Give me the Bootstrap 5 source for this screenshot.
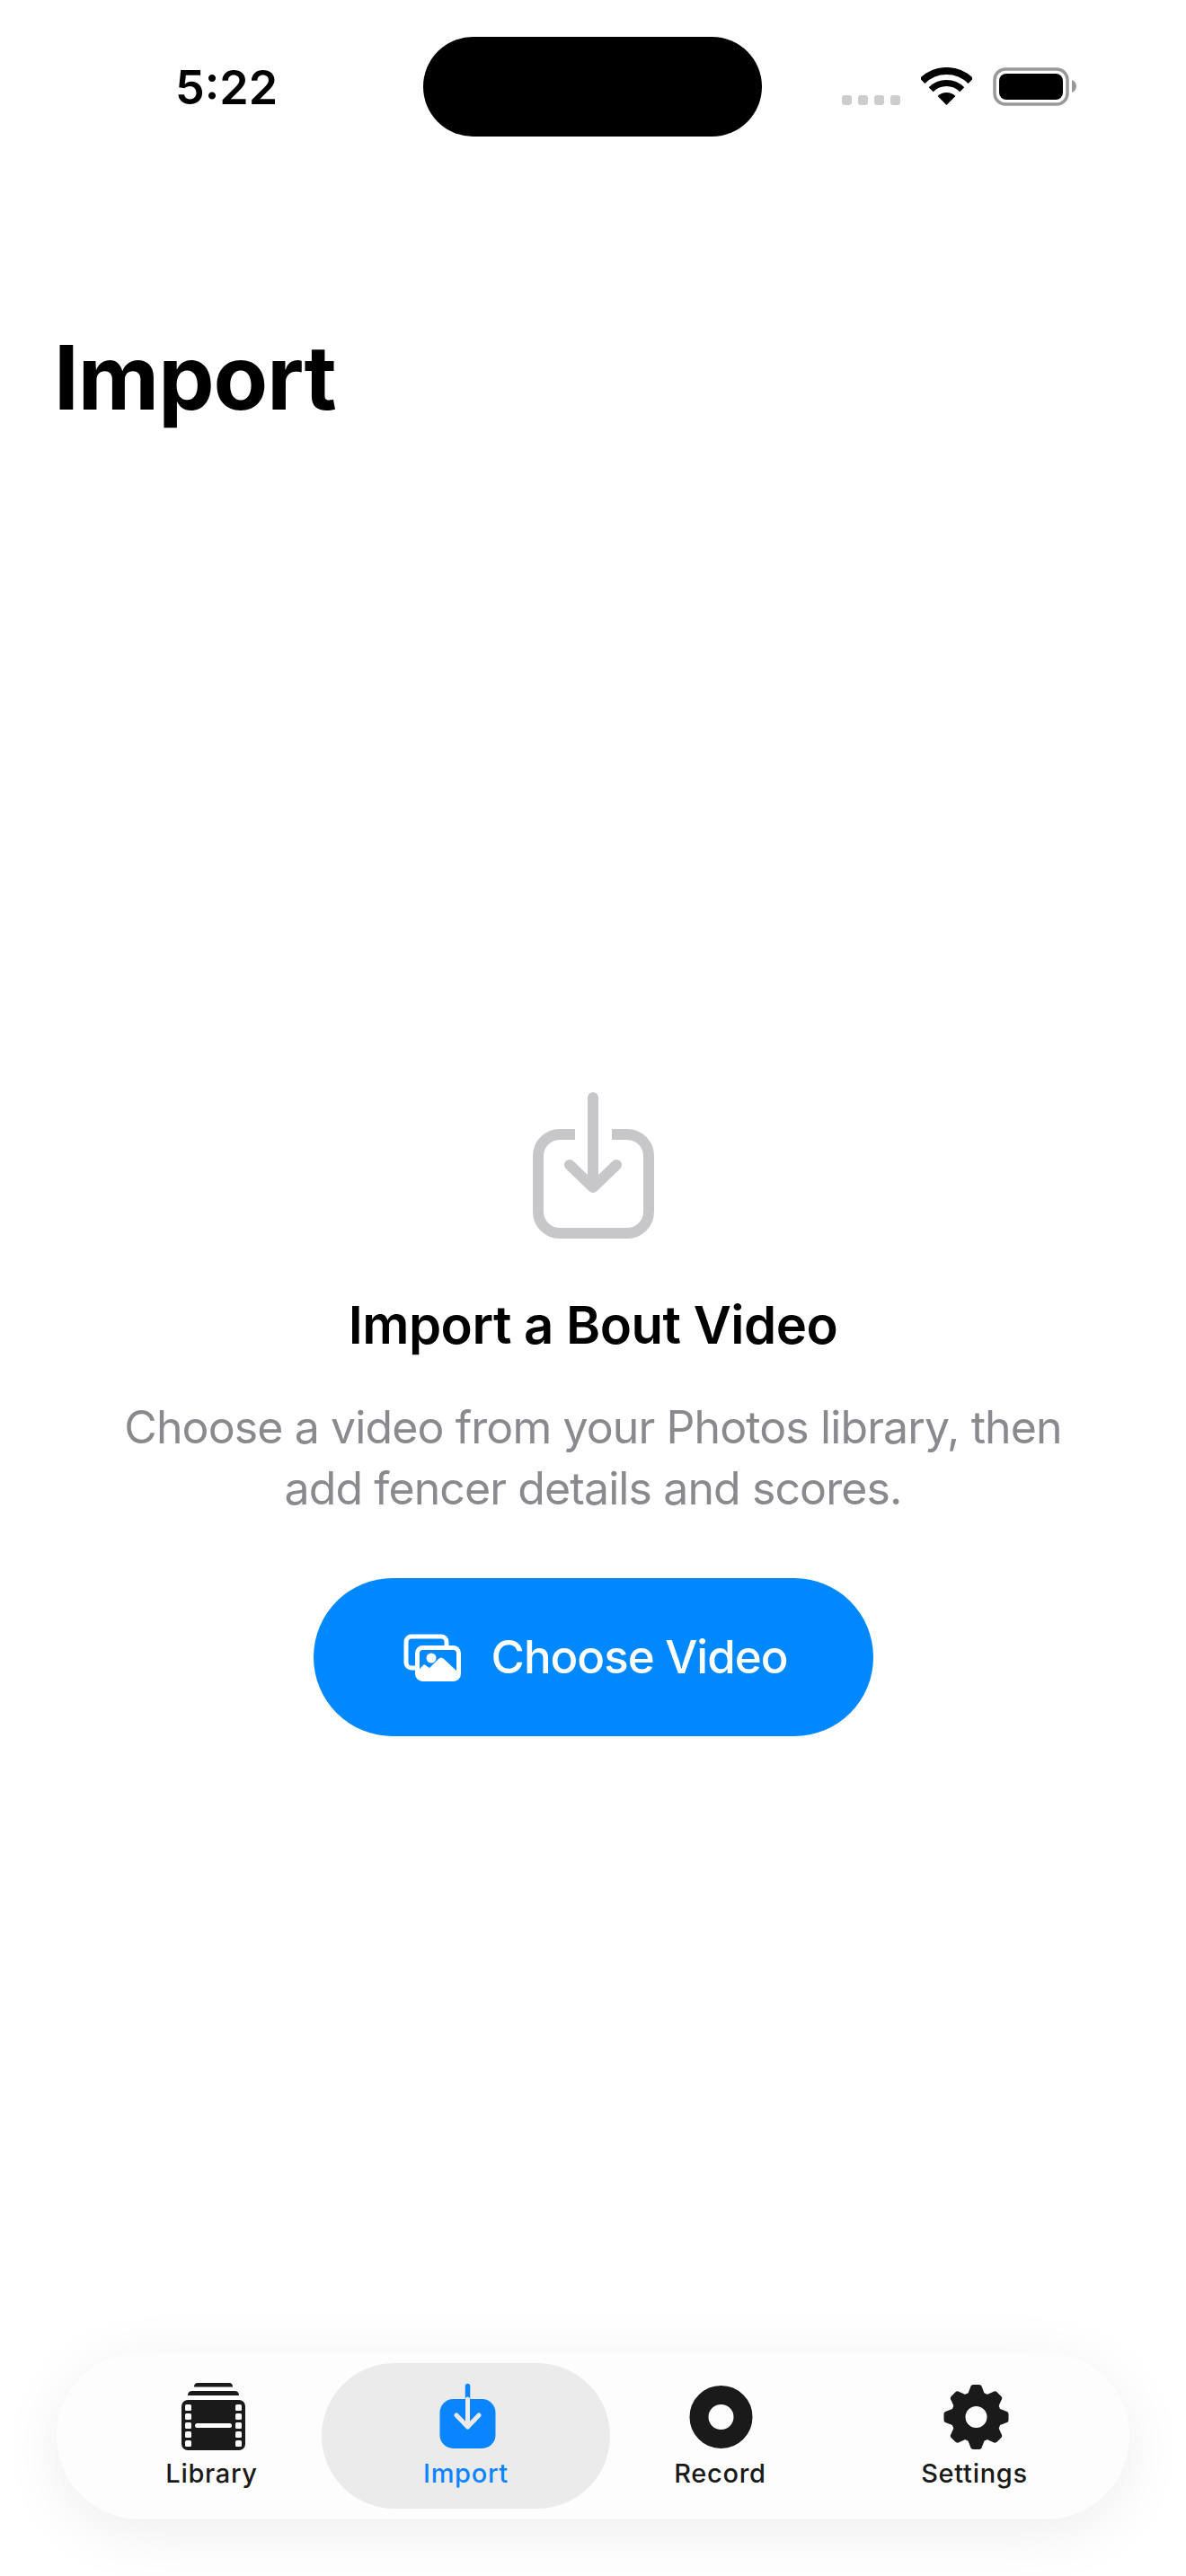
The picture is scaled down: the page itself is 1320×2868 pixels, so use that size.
<!DOCTYPE html>
<html lang="en">

<head>
    <meta charset="UTF-8">
    <meta name="viewport" content="width=device-width, initial-scale=1.0">
    <title>Import</title>
    <link href="https://cdn.jsdelivr.net/npm/bootstrap@5.3.0/dist/css/bootstrap.min.css" rel="stylesheet">
    <style>
        body {
            font-family: "Inter", "Liberation Sans", sans-serif;
            background: #fff;
            color: #000;
        }

        .phone-screen {
            width: 1320px;
            height: 2868px;
            overflow: hidden;
        }

        /* status bar */
        .status-row {
            padding: 41px 0 0 195px;
        }

        .status-time {
            width: 276px;
            margin-top: 26px;
            font-size: 52px;
            line-height: 62px;
            font-weight: 600;
        }

        .island {
            width: 377px;
            height: 111px;
            border-radius: 56px;
            background: #000;
        }

        .status-icons {
            margin: 34px 0 0 89px;
            gap: 23px;
        }

        .signal-dots {
            gap: 7px;
            padding-bottom: 1px;
        }

        .signal-dots span {
            width: 11px;
            height: 11px;
            border-radius: 3px;
            background: #cdcdcd;
        }

        /* heading */
        .page-title {
            margin: 208px 0 0 60px;
            font-size: 99px;
            line-height: 120px;
            font-weight: 700;
            letter-spacing: -1px;
        }

        /* empty state */
        .empty-state {
            padding-top: 736px;
        }

        .empty-title {
            margin: 61px 0 0;
            font-size: 58px;
            line-height: 70px;
            font-weight: 600;
            letter-spacing: -.5px;
        }

        .empty-text {
            margin: 45px 0 0;
            font-size: 50px;
            line-height: 68px;
            letter-spacing: -.9px;
            color: #8a8a8e;
        }

        .choose-btn {
            width: 623px;
            height: 176px;
            margin-top: 66px;
            padding: 0 0 0 6px;
            gap: 33px;
            border: 0;
            border-radius: 88px;
            background: #0088ff;
            font-size: 51px;
            font-weight: 500;
            letter-spacing: -1px;
            color: #fff;
        }

        /* tab bar */
        .tab-bar {
            height: 186px;
            margin: auto 63px 63px;
            padding: 12px 31px;
            display: grid;
            grid-template-columns: repeat(4, 1fr);
            border-radius: 93px;
            background: #fdfdfd;
            box-shadow: 0 14px 70px rgba(0, 0, 0, .07);
        }

        .tab-link {
            padding-top: 22px;
            gap: 7px;
            border-radius: 81px;
            font-size: 29px;
            line-height: 36px;
            font-weight: 500;
            letter-spacing: .7px;
            color: #1a1a1a;
            text-decoration: none;
        }

        .tab-link.is-active {
            margin: 0 -19px;
            background: #ebebeb;
            color: #0a84ff;
        }
    </style>
</head>

<body>
    <div class="phone-screen d-flex flex-column">
        <div class="status-row d-flex align-items-start">
            <div class="status-time">5:22</div>
            <div class="island"></div>
            <div class="status-icons d-flex align-items-end">
                <div class="signal-dots d-flex">
                    <span></span><span></span><span></span><span></span>
                </div>
                <svg width="57" height="43" viewBox="0 0 57 43">
                    <path d="M1.6 15.1A38 38 0 0 1 55.4 15.1" fill="none" stroke="#000" stroke-width="8" />
                    <path d="M11.2 24.7A24.5 24.5 0 0 1 45.8 24.7" fill="none" stroke="#000" stroke-width="7" />
                    <path d="M28.5 42L18.6 32.1A14 14 0 0 1 38.4 32.1Z" />
                </svg>
                <svg width="93" height="43" viewBox="0 0 93 43">
                    <rect x="2" y="2" width="81" height="39" rx="12" fill="none" stroke="#999" stroke-width="3.5" />
                    <rect x="7" y="7" width="71" height="29" rx="8" />
                    <path d="M88 14C91 15 93 18 93 21S91 27 88 28Z" fill="#999" />
                </svg>
            </div>
        </div>

        <h1 class="page-title">Import</h1>

        <div class="empty-state d-flex flex-column align-items-center text-center">
            <svg width="135" height="163" viewBox="0 0 135 163" fill="none" stroke="#c7c7c9" stroke-width="12">
                <path d="M47 47H30A24 24 0 0 0 6 71V133A24 24 0 0 0 30 157H105A24 24 0 0 0 129 133V71A24 24 0 0 0 105 47H88" />
                <path d="M67 6V105" stroke-linecap="round" />
                <path d="M41 81L67 106L93 81" stroke-linecap="round" stroke-linejoin="round" />
            </svg>
            <h2 class="empty-title">Import a Bout Video</h2>
            <p class="empty-text">Choose a video from your Photos library, then<br>add fencer details and scores.</p>
            <button type="button" class="btn choose-btn d-flex align-items-center justify-content-center">
                <svg width="64" height="53" viewBox="0 0 64 53">
                    <path d="M13 38H9A6 6 0 0 1 3 32V9A6 6 0 0 1 9 3H42A6 6 0 0 1 48 9V13" fill="none" stroke="#fff" stroke-width="5" />
                    <rect x="15.5" y="15.5" width="46" height="35" rx="6" fill="none" stroke="#fff" stroke-width="5" />
                    <path d="M17 45V40L23 34L29 38L39 28C41 26 43 26 45 28L60 42V45C60 48 58 50 56 50H21C19 50 17 48 17 45Z" fill="#fff" />
                    <circle cx="31" cy="27" r="5.5" fill="#fff" />
                </svg>
                <span>Choose Video</span>
            </button>
        </div>

        <nav class="tab-bar">
            <a href="#" class="tab-link d-flex flex-column align-items-center">
                <svg width="80" height="76" viewBox="0 0 80 76">
                    <path d="M20 4.5Q20 0 24 0H59Q63 0 63 4.5Z" fill="#1a1a1a" />
                    <path d="M13 14Q13 9 18 9H65Q70 9 70 14Z" fill="#1a1a1a" />
                    <rect x="6" y="19" width="71" height="56" rx="7" fill="#1a1a1a" />
                    <g fill="#fdfdfd">
                        <rect x="10" y="24" width="7" height="7" rx="1.5" />
                        <rect x="10" y="34" width="7" height="7" rx="1.5" />
                        <rect x="10" y="44" width="7" height="7" rx="1.5" />
                        <rect x="10" y="54" width="7" height="7" rx="1.5" />
                        <rect x="10" y="64" width="7" height="7" rx="1.5" />
                        <rect x="66" y="24" width="7" height="7" rx="1.5" />
                        <rect x="66" y="34" width="7" height="7" rx="1.5" />
                        <rect x="66" y="44" width="7" height="7" rx="1.5" />
                        <rect x="66" y="54" width="7" height="7" rx="1.5" />
                        <rect x="66" y="64" width="7" height="7" rx="1.5" />
                        <rect x="21" y="45" width="41" height="5" rx="2.5" />
                    </g>
                </svg>
                <span>Library</span>
            </a>
            <a href="#" class="tab-link is-active d-flex flex-column align-items-center">
                <svg width="80" height="76" viewBox="0 0 80 76">
                    <rect x="10.5" y="18" width="62" height="55" rx="15" fill="#0a84ff" />
                    <path d="M41.5 3.5V18" stroke="#0a84ff" stroke-width="5.5" stroke-linecap="round" fill="none" />
                    <path d="M41.5 18V49M29 36L41.5 49L54 36" stroke="#ebebeb" stroke-width="5" stroke-linecap="round" stroke-linejoin="round" fill="none" />
                </svg>
                <span>Import</span>
            </a>
            <a href="#" class="tab-link d-flex flex-column align-items-center">
                <svg width="80" height="76" viewBox="0 0 80 76">
                    <circle cx="40.5" cy="38" r="24.5" fill="none" stroke="#1a1a1a" stroke-width="21" />
                </svg>
                <span>Record</span>
            </a>
            <a href="#" class="tab-link d-flex flex-column align-items-center">
                <svg width="80" height="76" viewBox="0 0 80 76">
                    <g transform="translate(41.5 38)" fill="#1a1a1a">
                        <circle r="20" fill="none" stroke="#1a1a1a" stroke-width="16" />
                        <path id="gear-tooth" d="M-10 -24L-6.5 -33Q-6 -36 -3 -36H3Q6 -36 6.5 -33L10 -24Z" />
                        <use href="#gear-tooth" transform="rotate(45)" />
                        <use href="#gear-tooth" transform="rotate(90)" />
                        <use href="#gear-tooth" transform="rotate(135)" />
                        <use href="#gear-tooth" transform="rotate(180)" />
                        <use href="#gear-tooth" transform="rotate(225)" />
                        <use href="#gear-tooth" transform="rotate(270)" />
                        <use href="#gear-tooth" transform="rotate(315)" />
                    </g>
                </svg>
                <span>Settings</span>
            </a>
        </nav>
    </div>

    <script src="https://cdn.jsdelivr.net/npm/bootstrap@5.3.0/dist/js/bootstrap.bundle.min.js"></script>
</body>

</html>
